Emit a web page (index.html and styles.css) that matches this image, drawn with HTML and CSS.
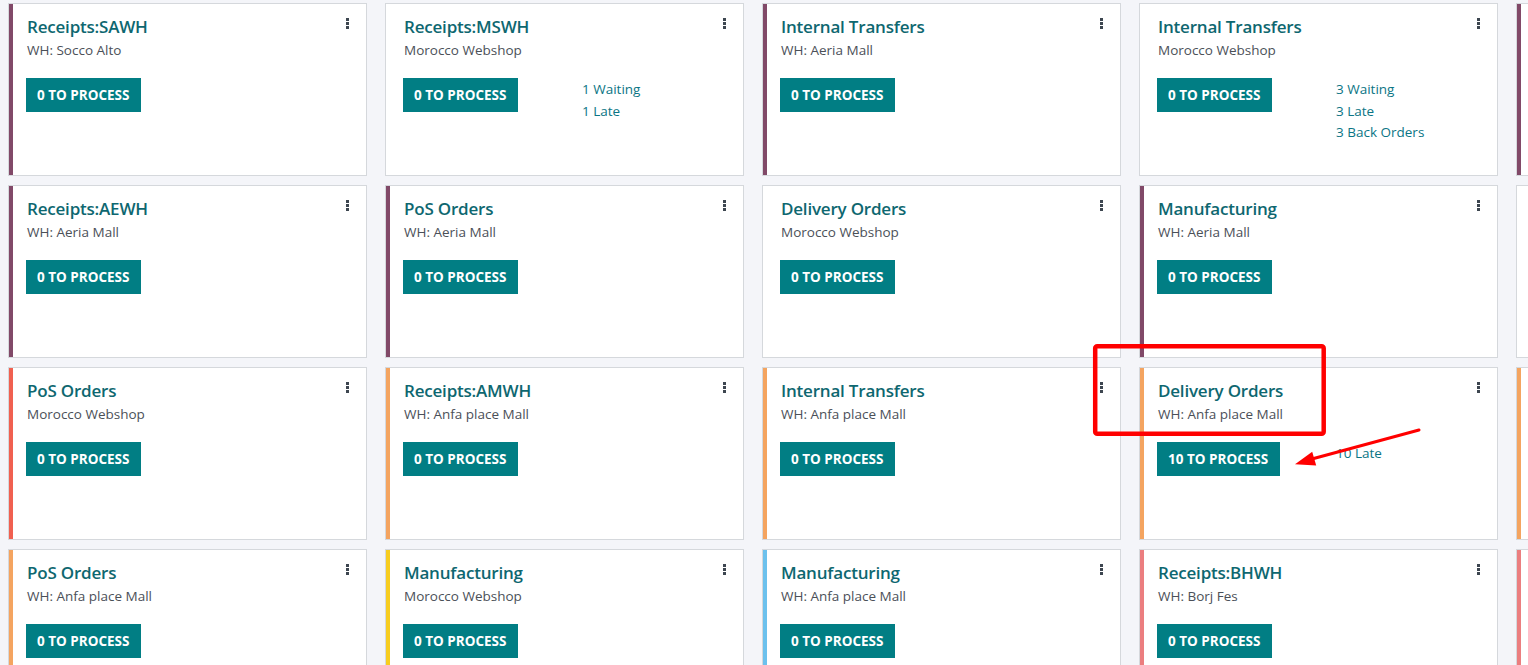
FILE: index.html
```html
<!DOCTYPE html>
<html lang="en">
<head>
<meta charset="utf-8">
<title>Inventory Overview</title>
<link rel="stylesheet" href="styles.css">
</head>
<body>
<div class="board">
  <!-- Row 1 -->
  <div class="card c-purple">
    <div class="head"><div><div class="title">Receipts:SAWH</div><div class="sub">WH: Socco Alto</div></div><div class="kebab"><span></span><span></span><span></span></div></div>
    <div class="body"><div class="btn">0 To Process</div></div>
  </div>
  <div class="card">
    <div class="head"><div><div class="title">Receipts:MSWH</div><div class="sub">Morocco Webshop</div></div><div class="kebab"><span></span><span></span><span></span></div></div>
    <div class="body"><div class="btn">0 To Process</div><div class="stats"><span>1 Waiting</span><span>1 Late</span></div></div>
  </div>
  <div class="card c-purple">
    <div class="head"><div><div class="title">Internal Transfers</div><div class="sub">WH: Aeria Mall</div></div><div class="kebab"><span></span><span></span><span></span></div></div>
    <div class="body"><div class="btn">0 To Process</div></div>
  </div>
  <div class="card">
    <div class="head"><div><div class="title">Internal Transfers</div><div class="sub">Morocco Webshop</div></div><div class="kebab"><span></span><span></span><span></span></div></div>
    <div class="body"><div class="btn">0 To Process</div><div class="stats"><span>3 Waiting</span><span>3 Late</span><span>3 Back Orders</span></div></div>
  </div>
  <div class="card c-purple"></div>

  <!-- Row 2 -->
  <div class="card c-purple">
    <div class="head"><div><div class="title">Receipts:AEWH</div><div class="sub">WH: Aeria Mall</div></div><div class="kebab"><span></span><span></span><span></span></div></div>
    <div class="body"><div class="btn">0 To Process</div></div>
  </div>
  <div class="card c-purple">
    <div class="head"><div><div class="title">PoS Orders</div><div class="sub">WH: Aeria Mall</div></div><div class="kebab"><span></span><span></span><span></span></div></div>
    <div class="body"><div class="btn">0 To Process</div></div>
  </div>
  <div class="card">
    <div class="head"><div><div class="title">Delivery Orders</div><div class="sub">Morocco Webshop</div></div><div class="kebab"><span></span><span></span><span></span></div></div>
    <div class="body"><div class="btn">0 To Process</div></div>
  </div>
  <div class="card c-purple">
    <div class="head"><div><div class="title">Manufacturing</div><div class="sub">WH: Aeria Mall</div></div><div class="kebab"><span></span><span></span><span></span></div></div>
    <div class="body"><div class="btn">0 To Process</div></div>
  </div>
  <div class="card"></div>

  <!-- Row 3 -->
  <div class="card c-red">
    <div class="head"><div><div class="title">PoS Orders</div><div class="sub">Morocco Webshop</div></div><div class="kebab"><span></span><span></span><span></span></div></div>
    <div class="body"><div class="btn">0 To Process</div></div>
  </div>
  <div class="card c-orange">
    <div class="head"><div><div class="title">Receipts:AMWH</div><div class="sub">WH: Anfa place Mall</div></div><div class="kebab"><span></span><span></span><span></span></div></div>
    <div class="body"><div class="btn">0 To Process</div></div>
  </div>
  <div class="card c-orange">
    <div class="head"><div><div class="title">Internal Transfers</div><div class="sub">WH: Anfa place Mall</div></div><div class="kebab"><span></span><span></span><span></span></div></div>
    <div class="body"><div class="btn">0 To Process</div></div>
  </div>
  <div class="card c-orange">
    <div class="head"><div><div class="title">Delivery Orders</div><div class="sub">WH: Anfa place Mall</div></div><div class="kebab"><span></span><span></span><span></span></div></div>
    <div class="body"><div class="btn">10 To Process</div><div class="stats"><span>10 Late</span></div></div>
  </div>
  <div class="card c-orange"></div>

  <!-- Row 4 -->
  <div class="card c-orange">
    <div class="head"><div><div class="title">PoS Orders</div><div class="sub">WH: Anfa place Mall</div></div><div class="kebab"><span></span><span></span><span></span></div></div>
    <div class="body"><div class="btn">0 To Process</div></div>
  </div>
  <div class="card c-yellow">
    <div class="head"><div><div class="title">Manufacturing</div><div class="sub">Morocco Webshop</div></div><div class="kebab"><span></span><span></span><span></span></div></div>
    <div class="body"><div class="btn">0 To Process</div></div>
  </div>
  <div class="card c-blue">
    <div class="head"><div><div class="title">Manufacturing</div><div class="sub">WH: Anfa place Mall</div></div><div class="kebab"><span></span><span></span><span></span></div></div>
    <div class="body"><div class="btn">0 To Process</div></div>
  </div>
  <div class="card c-pink">
    <div class="head"><div><div class="title">Receipts:BHWH</div><div class="sub">WH: Borj Fes</div></div><div class="kebab"><span></span><span></span><span></span></div></div>
    <div class="body"><div class="btn">0 To Process</div></div>
  </div>
  <div class="card c-pink"></div>
</div>

<svg class="annot" width="1528" height="665" viewBox="0 0 1528 665" aria-hidden="true">
  <rect x="1095.2" y="346.3" width="228.5" height="87.5" rx="2" fill="none" stroke="#ff0000" stroke-width="4.5"/>
  <line x1="1419" y1="430" x2="1310" y2="459.5" stroke="#ff0000" stroke-width="3" stroke-linecap="round"/>
  <polygon points="1295,464.3 1312.2,451.8 1316.2,465.5" fill="#ff0000"/>
</svg>
</body>
</html>
```

FILE: styles.css
```css
html, body {
  margin: 0;
  padding: 0;
  background: #f4f5f9;
  overflow: hidden;
  font-family: "Open Sans", "Noto Sans", sans-serif;
}

.board {
  display: grid;
  grid-template-columns: repeat(5, 359px);
  grid-auto-rows: 173px;
  column-gap: 18px;
  row-gap: 9px;
  padding: 3px 0 0 8px;
  width: 1520px;
  height: 662px;
  overflow: hidden;
}

.card {
  box-sizing: border-box;
  background: #fff;
  border: 1px solid #d5d8dc;
  padding: 11px 17px 0 18px;
}

.c-purple { box-shadow: inset 4px 0 0 #814968; }
.c-red    { box-shadow: inset 4px 0 0 #f06050; }
.c-orange { box-shadow: inset 4px 0 0 #f4a460; }
.c-yellow { box-shadow: inset 4px 0 0 #f7cd1f; }
.c-blue   { box-shadow: inset 4px 0 0 #6cc1ed; }
.c-pink   { box-shadow: inset 4px 0 0 #eb7e7f; }

.head {
  display: flex;
  justify-content: space-between;
  align-items: flex-start;
}

.title {
  font-size: 17px;
  font-weight: 600;
  line-height: 24px;
  color: #0e6770;
  letter-spacing: -0.2px;
}

.sub {
  margin-top: 1px;
  font-size: 13.5px;
  line-height: 20px;
  color: #4b5058;
}

.kebab {
  display: flex;
  flex-direction: column;
  gap: 1px;
  margin-top: 3px;
}
.kebab span {
  width: 3px;
  height: 3px;
  background: #3d4650;
}

.body {
  display: grid;
  grid-template-columns: 178px auto;
  align-items: start;
  margin-top: 18px;
}

.btn {
  justify-self: start;
  background: #017e84;
  color: #fff;
  font-size: 13.5px;
  font-weight: 700;
  text-transform: uppercase;
  line-height: 34px;
  padding: 0 12px 0 11px;
  margin-left: -1px;
}

.stats {
  display: flex;
  flex-direction: column;
  margin-top: 1px;
  font-size: 13.5px;
  line-height: 21.5px;
  color: #0b7585;
}

.annot {
  position: absolute;
  left: 0;
  top: 0;
  pointer-events: none;
}
```
